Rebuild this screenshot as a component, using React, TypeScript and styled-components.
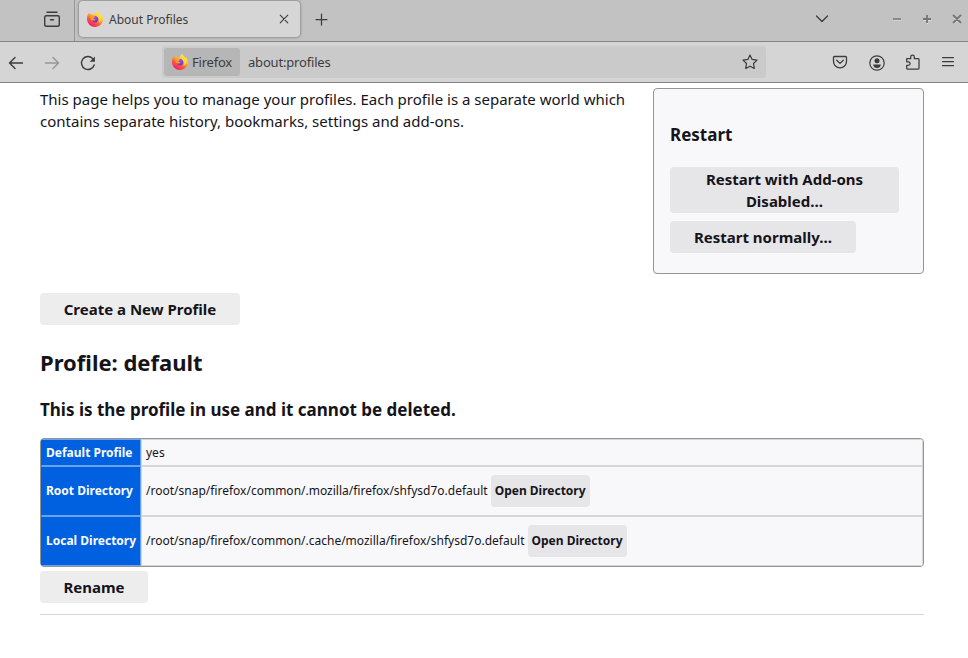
import React from "react";
import styled, { createGlobalStyle, css } from "styled-components";

const GlobalStyle = createGlobalStyle`
  * { box-sizing: border-box; }
  body { margin: 0; background: #fff; font-family: "Noto Sans", sans-serif; color: #15141a; }
  button { font-family: inherit; color: inherit; border: 0; padding: 0; margin: 0; }
`;

const Window = styled.div`
  width: 968px;
  height: 658px;
  overflow: hidden;
  background: #fff;
`;

const TabStrip = styled.div`
  display: flex;
  height: 42px;
  background: #c2c2c2;
  border-bottom: 1px solid #848484;
  color: #3c3c3c;
`;

const RecentArea = styled.div`
  width: 75px;
  height: 41px;
  padding: 8px 0 0 41px;
  border-right: 1px solid #989898;
`;

const Tab = styled.div`
  display: flex;
  align-items: center;
  width: 221px;
  height: 36px;
  margin: 1px 0 0 4px;
  padding: 0 8px 0 8px;
  border-radius: 4px;
  background: #d6d6d6;
  box-shadow: 0 0 3px rgba(0, 0, 0, 0.5);
`;

const TabTitle = styled.span`
  flex: 1;
  margin-left: 6px;
  padding-top: 2px;
  font-size: 12px;
  line-height: 18px;
`;

const IconBox = styled.span<{ $ml?: number; $mt?: number; $dim?: boolean }>`
  display: block;
  flex: none;
  height: fit-content;
  margin-left: ${(p) => p.$ml ?? 0}px;
  margin-top: ${(p) => p.$mt ?? 0}px;
  opacity: ${(p) => (p.$dim ? 0.4 : 1)};
  svg { display: block; }
`;

const Toolbar = styled.div`
  display: flex;
  align-items: center;
  height: 41px;
  background: #d5d5d5;
  border-bottom: 1px solid #848484;
  color: #3c3c3c;
`;

const UrlBar = styled.div`
  display: flex;
  align-items: center;
  width: 604px;
  height: 32px;
  margin-left: 66px;
  padding: 0 8px 0 2px;
  border-radius: 4px;
  background: #cacaca;
`;

const Identity = styled.div`
  display: flex;
  align-items: center;
  width: 76px;
  height: 28px;
  padding-left: 8px;
  border-radius: 3px;
  background: #b6b6b6;
  font-size: 13px;
`;

const IdentityLabel = styled.span`
  margin-left: 4px;
  letter-spacing: -0.22px;
`;

const Address = styled.span`
  flex: 1;
  margin-left: 8px;
  font-size: 13px;
  letter-spacing: -0.18px;
`;

const Page = styled.main`
  padding: 5px 44px 0 40px;
  font-size: 15px;
  line-height: 22px;
`;

const Intro = styled.section`
  display: flex;
  justify-content: space-between;
  height: 186px;
`;

const IntroText = styled.p`
  width: 600px;
  margin: 0;
`;

const RestartBox = styled.aside`
  display: flex;
  flex-direction: column;
  align-items: flex-start;
  width: 271px;
  height: 186px;
  padding: 34px 24px 0 16px;
  border: 1px solid #949498;
  border-radius: 4px;
  background: #f8f8fa;
`;

const BoxTitle = styled.h3`
  margin: 0 0 21px;
  font-size: 17px;
  line-height: 23px;
  font-weight: 700;
`;

const Button = styled.button<{ $width: number; $tall?: boolean; $inBox?: boolean; $small?: boolean }>`
  flex: none;
  width: ${(p) => p.$width}px;
  height: ${(p) => (p.$tall ? 46 : 32)}px;
  border-radius: 4px;
  background: ${(p) => (p.$inBox ? "#e6e6e8" : "#ededed")};
  font-size: 15px;
  font-weight: 700;
  line-height: 22px;
  ${(p) => p.$tall && css`margin-bottom: 8px;`}
  ${(p) => p.$small && css`margin-left: 3px; font-size: 12px;`}
`;

const CreateRow = styled.div`
  display: flex;
  margin-top: 19px;
`;

const ProfileTitle = styled.h2`
  margin: 22px 0 0;
  font-size: 22px;
  font-weight: 700;
  line-height: 30px;
`;

const ProfileNote = styled.h3`
  margin: 20px 0 16px;
  font-size: 17px;
  font-weight: 700;
  line-height: 25px;
`;

const Table = styled.div`
  overflow: hidden;
  border: 1px solid #949498;
  border-radius: 4px;
  background: #f8f8fa;
  font-size: 12px;
`;

const Row = styled.div<{ $height: number }>`
  display: grid;
  grid-template-columns: 100px 1fr;
  height: ${(p) => p.$height}px;
`;

const HeadCell = styled.div`
  display: flex;
  align-items: center;
  padding-left: 4px;
  border: 1px solid #6aa2ef;
  border-left-color: #0061e0;
  background: #0061e0;
  color: #fbfbfe;
  font-weight: 700;
  white-space: nowrap;
`;

const Cell = styled.div`
  display: flex;
  align-items: center;
  padding-left: 4px;
  border: 1px solid #d6d6d9;
  white-space: nowrap;
`;

const RenameRow = styled.div`
  display: flex;
  padding: 4px 0 11px;
  border-bottom: 1px solid #d7d7d7;
`;

const Svg = ({ size = 16, children }: { size?: number; children: React.ReactNode }) => (
  <svg width={size} height={size} viewBox={`0 0 ${size} ${size}`} fill="none" stroke="currentColor" strokeWidth="1.25" strokeLinecap="round" strokeLinejoin="round">
    {children}
  </svg>
);

const FirefoxLogo = ({ id }: { id: string }) => (
  <svg width="16" height="16" viewBox="0 0 16 16">
    <defs>
      <linearGradient id={`${id}-flame`} x1="0.85" y1="0.05" x2="0.25" y2="1">
        <stop offset="0.1" stopColor="#fff14a" />
        <stop offset="0.4" stopColor="#ffb12b" />
        <stop offset="0.65" stopColor="#ff5b36" />
        <stop offset="1" stopColor="#f0107a" />
      </linearGradient>
      <radialGradient id={`${id}-globe`} cx="0.6" cy="0.2" r="0.9">
        <stop offset="0" stopColor="#a04cf0" />
        <stop offset="1" stopColor="#5a35c8" />
      </radialGradient>
    </defs>
    <path fill={`url(#${id}-flame)`} d="M15.300 5.500c-.3-.8-1-1.600-1.600-1.900.3.500.4 1 .4 1.300C13.300 2.900 10.800 2.200 10.200 0 8.800.8 8.300 2.300 8.200 3.200c-.8 0-1.500.3-2 .7C5 3.700 4.300 2.800 4.200 2.200 3.600 2.500 3 3.100 2.700 3.500 2.100 3 2.100 1.900 2.200 1.500 1 2.600 0 4.700 0 8.300A7.900 7.700 0 0 0 8 16c4.400 0 7.900-3.400 7.900-7.700 0-1-.2-2-.6-2.800Z" />
    <circle cx="8.200" cy="8.200" r="3.100" fill={`url(#${id}-globe)`} />
    <path fill="#ff9a2c" d="M3 5.200c1-.7 2.200-.6 3-.1 1 .1 1.600.4 2.300.5 0 .9-1.700 1.100-1.900 1.900.6.900 1.900.6 2.200.9-.4 1.100-2.300 1.500-3.600.8C3.600 8.400 3 6.700 3 5.200Z" />
    <path fill="#ffdc3e" d="M10.200 0c.5 2.200 3.400 3.200 4 6 .5 3-1 5-2.600 5.800 1.200-1.900 1-4.800-1.300-6.100C8.600 4.600 8.500 1.500 10.200 0Z" />
  </svg>
);

const profileRows = [
  { label: "Default Profile", value: "yes", height: 27, open: false },
  { label: "Root Directory", value: "/root/snap/firefox/common/.mozilla/firefox/shfysd7o.default", height: 50, open: true },
  { label: "Local Directory", value: "/root/snap/firefox/common/.cache/mozilla/firefox/shfysd7o.default", height: 50, open: true },
];

export default function App() {
  return (
    <Window>
      <GlobalStyle />
      <TabStrip>
        <RecentArea>
          <IconBox $mt={2} $ml={2}>
            <Svg size={18}>
              <path d="M4 2.200h10M3 5.800h12a1.300 1.300 0 0 1 1.300 1.300v7.300A1.800 1.800 0 0 1 14.500 16.200h-11a1.800 1.800 0 0 1-1.800-1.800V7.100A1.300 1.300 0 0 1 3 5.800ZM7.500 9.700h3" strokeWidth="1.400" />
            </Svg>
          </IconBox>
        </RecentArea>
        <Tab>
          <FirefoxLogo id="tab" />
          <TabTitle>About Profiles</TabTitle>
          <Svg><path d="m4.200 4.200 7.600 7.600m0-7.600-7.600 7.600" strokeWidth="1.100" /></Svg>
        </Tab>
        <IconBox $ml={13} $mt={11}><Svg><path d="M8.500 3v11M3 8.500h11" /></Svg></IconBox>
        <IconBox $ml={485} $mt={10}><Svg><path d="m2.500 6 5.500 5.500L13.500 6" strokeWidth="1.300" /></Svg></IconBox>
        <IconBox $ml={60} $mt={11}><Svg><path d="M3.500 9h8" stroke="#e4e4e4" strokeWidth="1" strokeLinecap="butt" /><path d="M3 8h8" stroke="#747474" strokeWidth="1.500" strokeLinecap="butt" /></Svg></IconBox>
        <IconBox $ml={14} $mt={11}><Svg><path d="M3.500 9h8M7.500 5v8" stroke="#e4e4e4" strokeLinecap="butt" /><path d="M3 8h8M7 4v8" stroke="#747474" strokeWidth="1.800" strokeLinecap="butt" /></Svg></IconBox>
        <IconBox $ml={14} $mt={11}><Svg><path d="m3.500 5.500 7 7m0-7-7 7" stroke="#e4e4e4" /><path d="m3.500 4.500 7 7m0-7-7 7" stroke="#747474" strokeWidth="1.800" /></Svg></IconBox>
      </TabStrip>
      <Toolbar>
        <IconBox $ml={8} $mt={1}><Svg><path d="M14.500 8h-13M7 2.500 1.500 8 7 13.500" strokeWidth="1.400" /></Svg></IconBox>
        <IconBox $ml={20} $mt={1} $dim><Svg><path d="M1.500 8h13M9 2.500 14.500 8 9 13.500" strokeWidth="1.400" /></Svg></IconBox>
        <IconBox $ml={20} $mt={2}><Svg><path d="M14.200 10A6.500 6.500 0 1 1 12.600 3.400" strokeWidth="1.400" /><path d="M14.900 1.500v5.200H9.700Z" fill="currentColor" stroke="none" /></Svg></IconBox>
        <UrlBar>
          <Identity><FirefoxLogo id="identity" /><IdentityLabel>Firefox</IdentityLabel></Identity>
          <Address>about:profiles</Address>
          <Svg><path d="m8 1 2.100 4.400 4.900.7-3.500 3.400.8 5L8 12.200l-4.300 2.300.8-5L1 6.100l4.900-.7Z" strokeWidth="1.200" /></Svg>
        </UrlBar>
        <IconBox $ml={66}><Svg><path d="M2.500 2.500h11a1 1 0 0 1 1 1V7.500a6.500 6.300 0 0 1-13 0v-4a1 1 0 0 1 1-1ZM4.700 6.200 8 9.400l3.300-3.200" strokeWidth="1.300" /></Svg></IconBox>
        <IconBox $ml={20.5} $mt={1}><Svg><circle cx="8" cy="8" r="7.200" strokeWidth="1.200" /><circle cx="8" cy="5.800" r="2.500" fill="currentColor" stroke="none" /><path d="M4.200 9.500h7.600c0 2-1.400 3.400-3.800 3.400s-3.800-1.400-3.800-3.400Z" fill="currentColor" stroke="none" /></Svg></IconBox>
        <IconBox $ml={20}><Svg><path d="M1.700 6.200V4.700h4V2.900a1.800 1.800 0 0 1 3.600 0v1.800h3.900a.8.800 0 0 1 .8.800v8.700a.8.800 0 0 1-.8.800H2.500a.8.800 0 0 1-.8-.8v-2.800h1.600a1.800 1.800 0 0 0 0-3.600H1.700Z" strokeWidth="1.250" /></Svg></IconBox>
        <IconBox $ml={19}><Svg><path d="M2.500 3.500h11M2.500 7.500h11M2.500 11.500h11" /></Svg></IconBox>
      </Toolbar>
      <Page>
        <Intro>
          <IntroText>This page helps you to manage your profiles. Each profile is a separate world which contains separate history, bookmarks, settings and add-ons.</IntroText>
          <RestartBox>
            <BoxTitle>Restart</BoxTitle>
            <Button $width={229} $tall $inBox>Restart with Add-ons<br />Disabled…</Button>
            <Button $width={186} $inBox>Restart normally…</Button>
          </RestartBox>
        </Intro>
        <CreateRow><Button $width={200}>Create a New Profile</Button></CreateRow>
        <ProfileTitle>Profile: default</ProfileTitle>
        <ProfileNote>This is the profile in use and it cannot be deleted.</ProfileNote>
        <Table>
          {profileRows.map((row) => (
            <Row key={row.label} $height={row.height}>
              <HeadCell>{row.label}</HeadCell>
              <Cell>
                {row.value}
                {row.open && <Button $width={99} $inBox $small>Open Directory</Button>}
              </Cell>
            </Row>
          ))}
        </Table>
        <RenameRow><Button $width={108}>Rename</Button></RenameRow>
      </Page>
    </Window>
  );
}
